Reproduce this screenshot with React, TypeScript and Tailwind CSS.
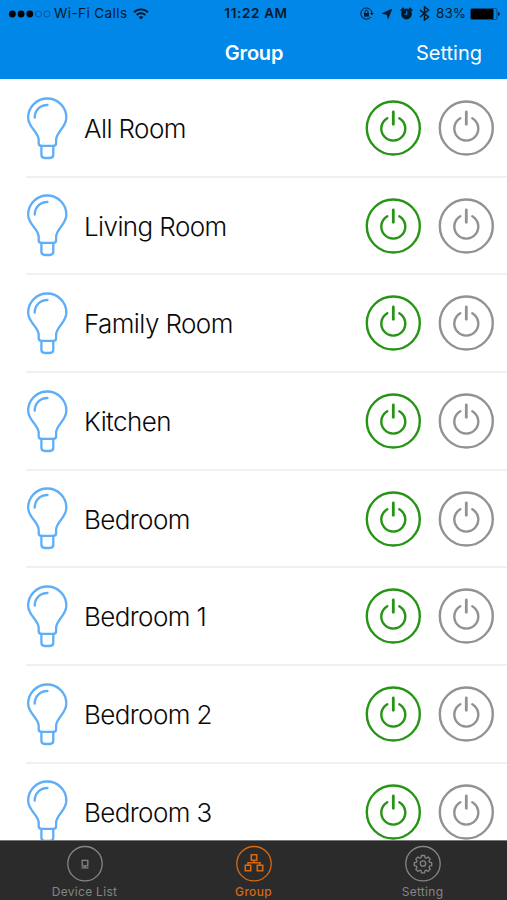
import React, { useState } from 'react';

const FONT = "font-['Inter','Liberation_Sans',sans-serif]";

const ROOMS = [
    'All Room',
    'Living Room',
    'Family Room',
    'Kitchen',
    'Bedroom',
    'Bedroom 1',
    'Bedroom 2',
    'Bedroom 3',
];

const TABS = ['Device List', 'Group', 'Setting'];

const BulbIcon: React.FC = () => (
    <svg width="42" height="64" viewBox="0 0 42 64" className="mt-[1.5px]" fill="none" stroke="#5eaef8" strokeWidth="2.3" strokeLinecap="round" strokeLinejoin="round">
        <path d="M12.7 46.5V43C12.7 34.500 2.150 31 2.150 20.6a19.1 19.1 0 0 1 38.2 0C40.350 31 30.100 34.500 30.100 43v3.300q0 2.600-2.600 2.600H15.300q-2.600 0-2.600-2.600z" />
        <path d="M15.400 49v8.500q0 3.500 3.500 3.500h4.900q3.500 0 3.500-3.500V49" />
        <path d="M8.700 20.700C8.700 13.500 14 8 21.500 8" />
    </svg>
);

const PowerIcon: React.FC = () => (
    <svg width="56" height="56" viewBox="0 0 56 56" fill="none" stroke="currentColor" strokeWidth="2.400" strokeLinecap="round">
        <circle cx="28.300" cy="28" r="26.500" />
        <path d="M22.300 18.200a12 12 0 1 0 12 0" />
        <path d="M28.300 12v12.300" strokeWidth="2.800" />
    </svg>
);

const TabIcon: React.FC<{ name: string }> = ({ name }) => (
    <svg width="38" height="38" viewBox="0 0 38 38" fill="none" stroke="currentColor" strokeWidth="1.300">
        <circle cx="19" cy="18.700" r="17.200" />
        {name === 'Device List' && (
            <path d="M16.200 15.400h5.600v5.400h-5.600zM19 20.800v2M15.500 22.800h7" />
        )}
        {name === 'Group' && (
            <path
                strokeWidth="1.600"
                d="M16.300 9.800h5.400v5.400h-5.400zM10.300 20.300h5.400v5.400h-5.400zM22.300 20.300h5.400v5.400h-5.400zM19 15.200v2.500M13 20.300v-2.600h12v2.600"
            />
        )}
        {name === 'Setting' && (
            <>
                <circle cx="19" cy="18.500" r="2.700" />
                <path
                    strokeLinejoin="round"
                    d="M17.500 10.500h3l.5 2.200 1.200.500 1.900-1.200 2.100 2.100-1.200 1.900.500 1.200 2.200.500v3l-2.200.500-.500 1.200 1.200 1.900-2.100 2.100-1.900-1.200-1.200.500-.500 2.200h-3l-.500-2.200-1.200-.500-1.900 1.200-2.100-2.100 1.200-1.900-.500-1.200-2.200-.500v-3l2.200-.500.500-1.200-1.200-1.900 2.100-2.100 1.900 1.200 1.200-.500z"
                />
            </>
        )}
    </svg>
);

const StatusBar: React.FC = () => (
    <div className="grid h-[27px] grid-cols-[1fr_auto_1fr] items-center pl-[9px] pr-[7px] text-[13px] text-[#06192b]">
        <div className="flex items-center">
            <svg width="43" height="8" viewBox="0 0 43 8" className="mr-[2px]">
                <g fill="#000">
                    <circle cx="3.400" cy="4" r="3.400" />
                    <circle cx="12.100" cy="4" r="3.400" />
                    <circle cx="20.800" cy="4" r="3.400" />
                </g>
                <g fill="none" stroke="#06498a" strokeWidth=".8">
                    <circle cx="29.400" cy="4" r="3" />
                    <circle cx="37.900" cy="4" r="3" />
                </g>
            </svg>
            <span className="text-[13.5px] tracking-[0.42px]">Wi-Fi Calls</span>
            <svg width="16" height="12" viewBox="0 0 16 12" className="ml-[5px]" fill="none" stroke="#06192b" strokeWidth="1.900">
                <path d="M1 4.200a10 10 0 0 1 14 0" />
                <path d="M3.700 7a6.200 6.200 0 0 1 8.600 0" />
                <path d="M8 11.400 5.700 9.100a3.300 3.300 0 0 1 4.600 0z" fill="#06192b" stroke="none" />
            </svg>
        </div>
        <span className="pl-[3px] text-[13.5px] font-semibold tracking-[0.65px]">11:22 AM</span>
        <div className="flex items-center justify-end">
            <svg width="14" height="13" viewBox="0 0 14 13" fill="none" stroke="#06192b" strokeWidth="1">
                <path d="M11 9.800A5.600 5.600 0 1 1 12 6.200" />
                <path d="M10.200 6h3.500L12 8.200z" fill="#06192b" stroke="none" />
                <path d="M4 6h5v3.600H4z" fill="#06192b" stroke="none" />
                <path d="M5 6V4.700a1.500 1.500 0 0 1 3 0V6" />
            </svg>
            <svg width="10" height="10" viewBox="0 0 10 10" className="ml-[8px]">
                <path d="M10 0 6 9.800 5 5.400 0 4.500z" fill="#06192b" stroke="#06192b" strokeWidth=".5" />
            </svg>
            <svg width="13" height="13" viewBox="0 0 13 13" className="ml-[8px]">
                <circle cx="6.500" cy="7" r="5.400" fill="#06192b" />
                <path d="M.800 3.800 3.700 1M12.200 3.800 9.300 1" stroke="#06192b" strokeWidth="1.800" />
                <path d="M6.700 4.200v3.100H4.500" fill="none" stroke="#0086e6" strokeWidth="1.100" />
            </svg>
            <svg width="11" height="15" viewBox="0 0 11 15" className="ml-[6px]" fill="none" stroke="#06192b" strokeWidth="1.500">
                <path d="m1 4 8.500 7-4 3V1l4 3L1 11" />
            </svg>
            <span className="ml-[6px] text-[13.5px]">83%</span>
            <svg width="30" height="12" viewBox="0 0 30 12" className="ml-[4px]">
                <rect x=".5" y=".5" width="26.500" height="11" rx="1.800" fill="none" stroke="#06396a" strokeWidth=".8" />
                <rect x="1" y="1" width="22.500" height="10" rx="1" fill="#000" />
                <path d="M28 4v4q1.800-.5 1.800-2T28 4z" fill="#06192b" />
            </svg>
        </div>
    </div>
);

export default function App() {
    const [activeTab, setActiveTab] = useState('Group');

    return (
        <div className={`${FONT} flex h-[900px] w-[507px] flex-col overflow-hidden bg-white`}>
            {/* Navigation bar */}
            <header className="h-[79px] shrink-0 bg-[#0087e7]">
                <StatusBar />
                <div className="grid h-[52px] grid-cols-[1fr_auto_1fr] items-center pr-[25px] pl-[26px] text-white">
                    <span />
                    <h1 className="text-[20px] font-semibold tracking-[-0.2px]">Group</h1>
                    <button className="justify-self-end text-[20px]">Setting</button>
                </div>
            </header>

            {/* Room list */}
            <main className="min-h-0 flex-1 overflow-hidden pt-px">
                {ROOMS.map((room) => (
                    <div key={room} className="flex h-[97.7px] pl-[26px]">
                        <div className="flex flex-1 items-center border-b-2 border-[#f0f0f2] pr-[13px]">
                            <BulbIcon />
                            <span className="ml-[16px] flex-1 pt-px text-[26px] font-light tracking-[-0.6px] text-[#0a0a0a]">
                                {room}
                            </span>
                            <button className="text-[#269414]">
                                <PowerIcon />
                            </button>
                            <button className="ml-[17px] text-[#929292]">
                                <PowerIcon />
                            </button>
                        </div>
                    </div>
                ))}
            </main>

            {/* Tab bar */}
            <nav className="grid h-[60px] shrink-0 grid-cols-3 border-t border-[#777] bg-[#2b2b2b]">
                {TABS.map((tab) => (
                    <button
                        key={tab}
                        onClick={() => setActiveTab(tab)}
                        className={`flex flex-col items-center pt-[4px] text-[12px] leading-[18px] tracking-[0.3px] ${
                            activeTab === tab ? 'font-medium text-[#d76812]' : 'text-[#858585]'
                        }`}
                    >
                        <TabIcon name={tab} />
                        <span>{tab}</span>
                    </button>
                ))}
            </nav>
        </div>
    );
}
